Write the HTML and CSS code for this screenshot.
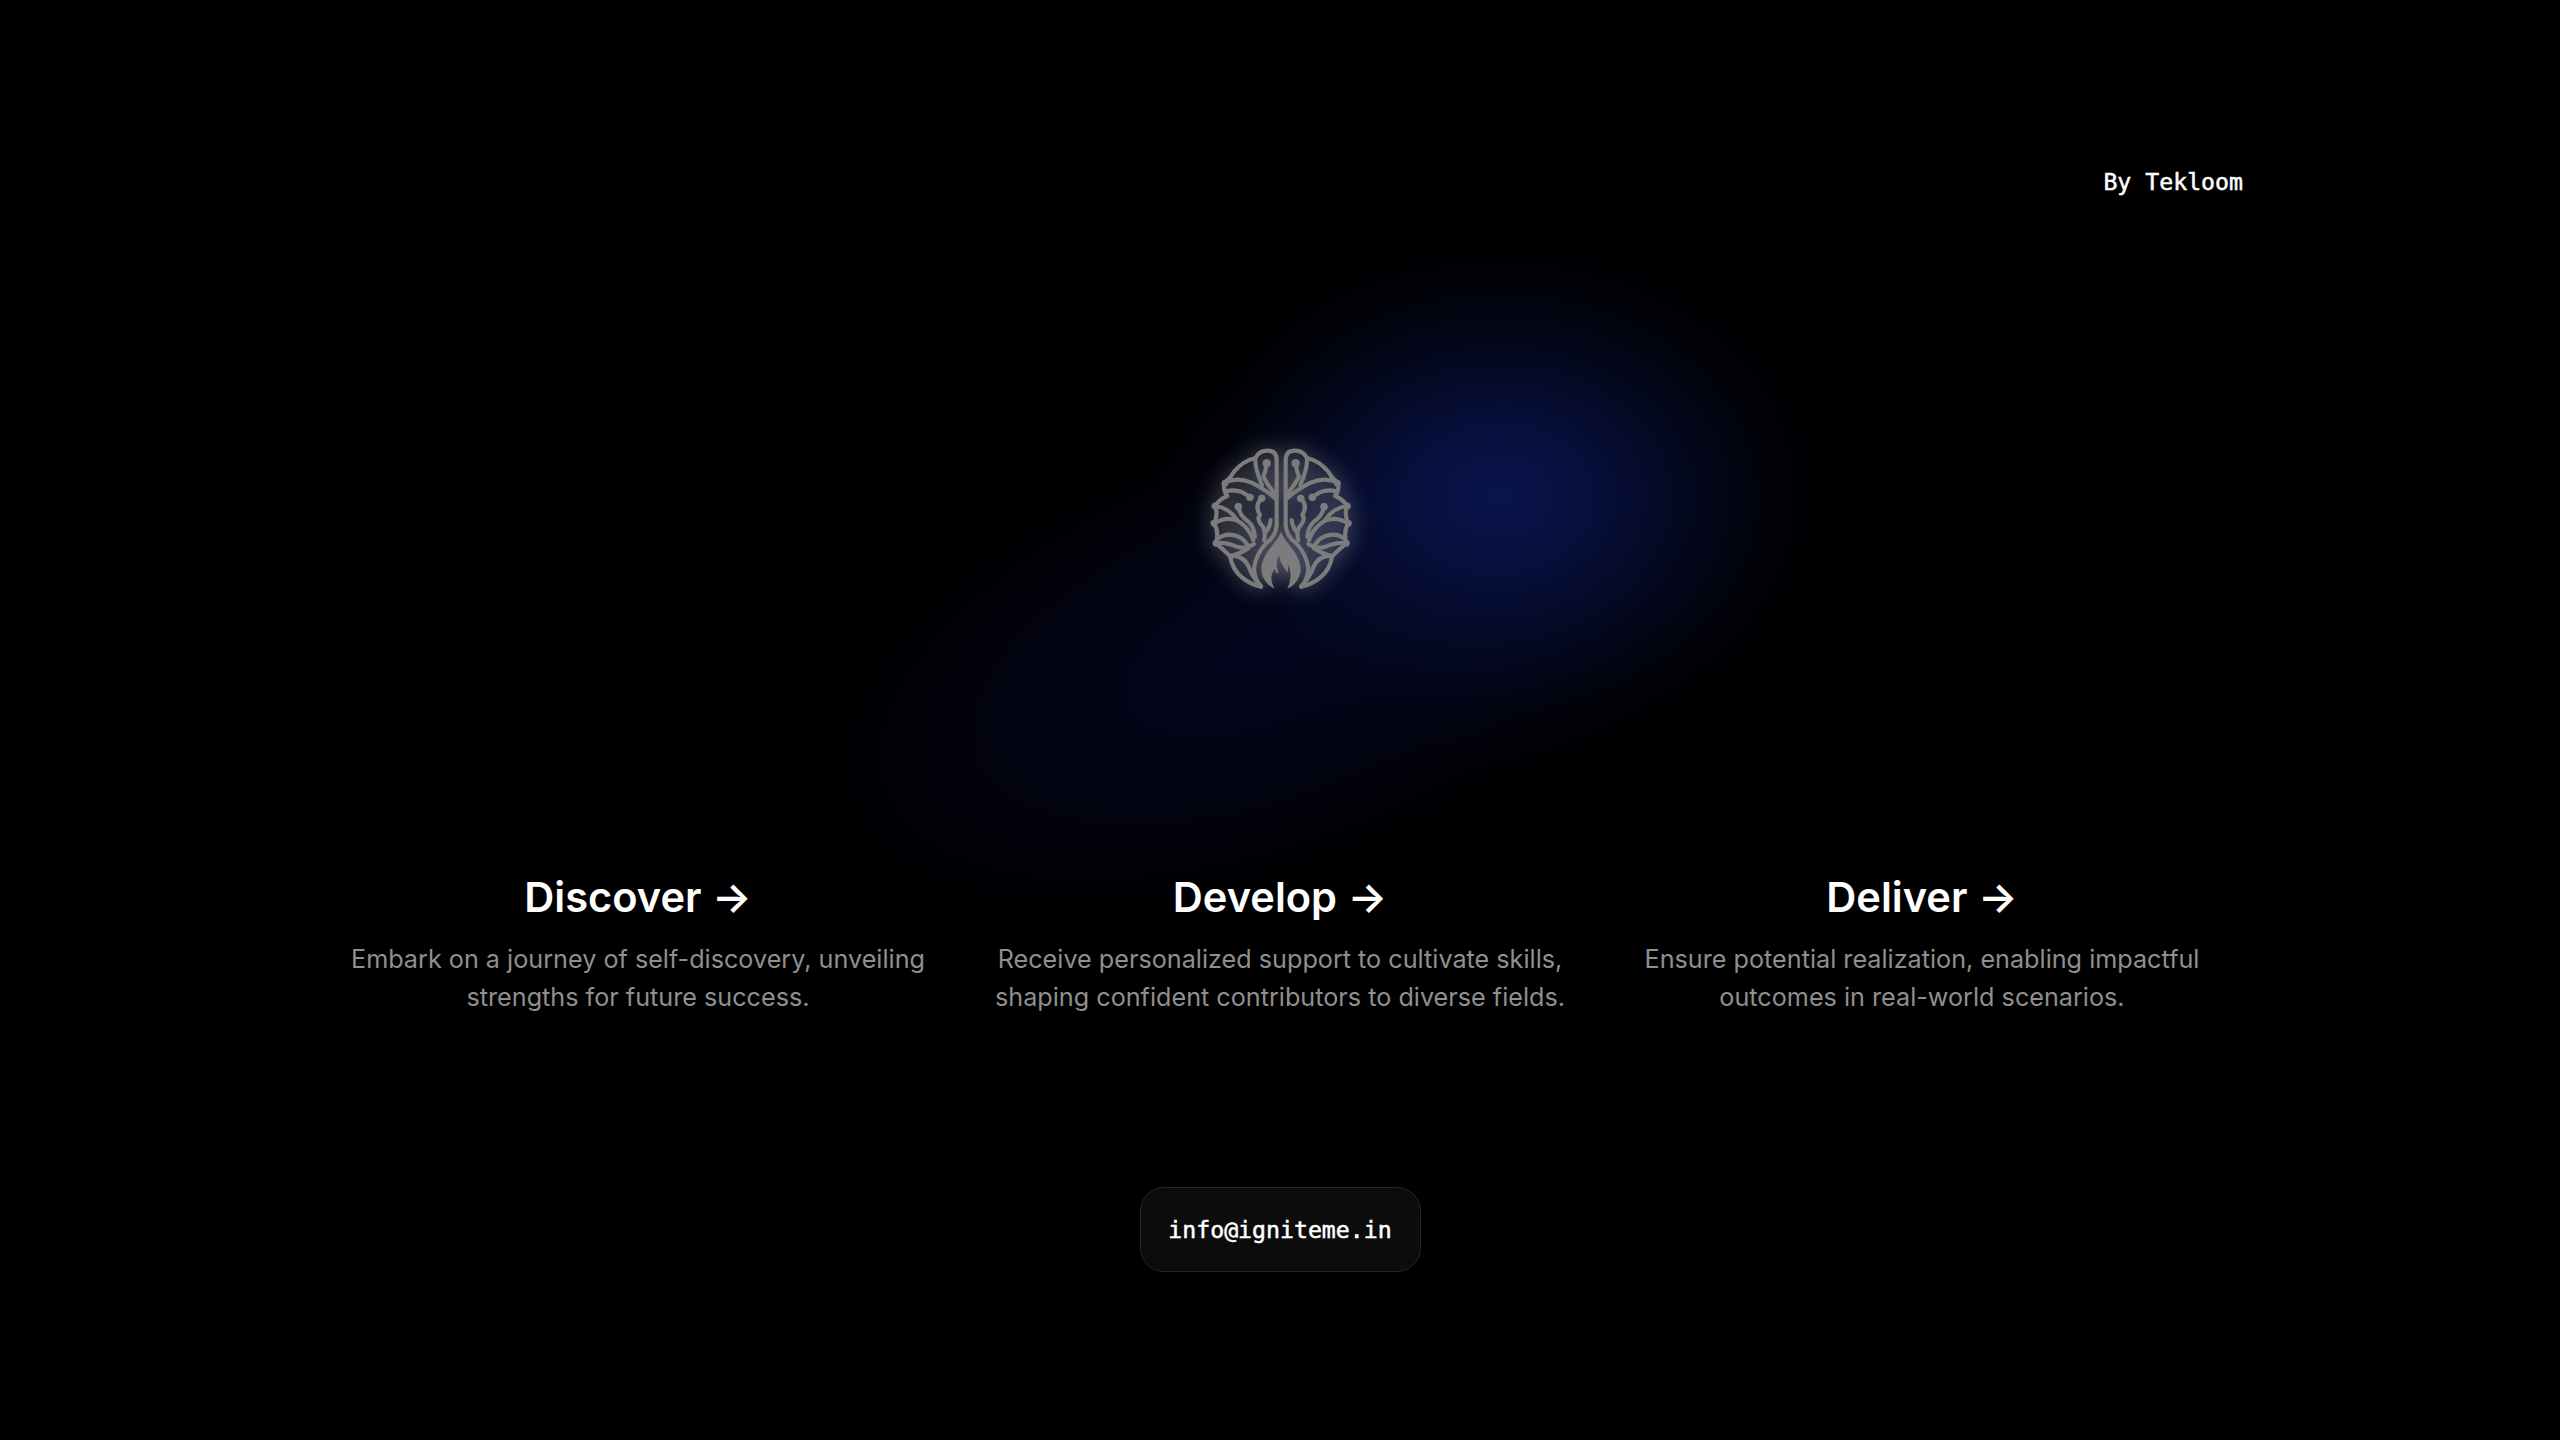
FILE: index.html
```html
<!DOCTYPE html>
<html lang="en">
<head>
    <meta charset="UTF-8">
    <meta name="viewport" content="width=device-width, initial-scale=1.0">
    <title>Ignite Me</title>
    <link rel="stylesheet" href="styles.css">
</head>
<body>

    <div class="glow glow-tail"></div>
    <div class="glow glow-main"></div>

    <main class="page">
        <div class="byline">By Tekloom</div>

        <!-- Brain logo -->
        <div class="logo">
            <svg class="brain" viewBox="0 0 600 510" width="200" height="170" aria-label="Brain logo">
                <defs>
                    <g id="half">
                        <g fill="none" stroke-width="12.5" stroke-linecap="round" stroke-linejoin="round">
                            <path d="M290 285V90Q290 62 262 62Q238 62 226 84Q190 92 162 125Q152 144 135 157Q126 176 142 198Q118 208 105 228Q116 250 102 280Q118 304 108 340Q128 356 150 378Q158 420 186 442Q212 464 243 470"/>
                            <path d="M226 84Q224 115 246 165"/>
                            <path d="M260 100Q258 122 250 140Q262 165 284 190"/>
                            <path d="M135 157Q172 140 215 158Q255 178 286 205"/>
                            <path d="M135 185Q175 172 210 202"/>
                            <path d="M175 230Q178 255 205 275Q222 290 225 320"/>
                            <path d="M105 228Q145 232 170 268"/>
                            <path d="M102 280Q140 258 172 272Q205 290 220 330"/>
                            <path d="M245 205Q222 228 240 255Q228 268 250 292Q258 310 252 330"/>
                            <path d="M272 270Q270 290 258 305"/>
                            <path d="M115 325Q142 305 175 320Q196 330 205 350"/>
                            <path d="M108 340Q135 335 170 350Q195 358 222 342"/>
                            <path d="M150 378Q180 372 205 355"/>
                            <path d="M150 378Q195 375 210 420Q222 448 243 468"/>
                            <path d="M290 285Q288 320 258 340Q228 372 222 415Q224 448 243 470"/>
                        </g>
                        <circle cx="260" cy="100" r="12"/>
                        <circle cx="210" cy="202" r="11"/>
                        <circle cx="245" cy="205" r="11"/>
                        <circle cx="175" cy="230" r="11"/>
                        <circle cx="105" cy="228" r="10"/>
                        <circle cx="102" cy="280" r="10"/>
                        <circle cx="108" cy="340" r="10"/>
                        <circle cx="135" cy="160" r="10"/>
                    </g>
                </defs>
                <g class="brain-lines">
                    <use href="#half"/>
                    <use href="#half" transform="translate(607 0) scale(-1 1)"/>
                </g>
                <path class="flame" fill-rule="evenodd" d="M303 303C296 336 246 366 244 416C243 442 262 466 284 476C270 452 272 432 284 418C288 430 292 432 296 428C288 410 288 392 298 376C300 404 316 414 322 428C326 414 324 408 322 402C334 418 336 446 322 476C346 466 362 442 362 416C360 366 310 336 303 303Z"/>
            </svg>
        </div>

        <section class="cards">
            <div class="card">
                <h2>Discover <span class="arrow">-&gt;</span></h2>
                <p>Embark on a journey of self-discovery, unveiling strengths for future success.</p>
            </div>
            <div class="card">
                <h2>Develop <span class="arrow">-&gt;</span></h2>
                <p>Receive personalized support to cultivate skills, shaping confident contributors to diverse fields.</p>
            </div>
            <div class="card">
                <h2>Deliver <span class="arrow">-&gt;</span></h2>
                <p>Ensure potential realization, enabling impactful outcomes in real-world scenarios.</p>
            </div>
        </section>

        <div class="contact">
            <a class="email" href="mailto:info@igniteme.in">info@igniteme.in</a>
        </div>
    </main>

</body>
</html>
```

FILE: styles.css
```css
* {
    margin: 0;
    padding: 0;
    box-sizing: border-box;
}

html, body {
    height: 100%;
}

body {
    background-color: #000;
    color: #fff;
    font-family: 'Inter', sans-serif;
    overflow: hidden;
}

/* Blue glow behind the logo */
.glow {
    position: absolute;
    border-radius: 50%;
}

.glow-main {
    left: 1150px;
    top: 220px;
    width: 700px;
    height: 550px;
    background: radial-gradient(closest-side, rgba(9, 20, 78, 1) 0%, rgba(8, 17, 66, 0.85) 28%, rgba(6, 13, 50, 0.55) 55%, rgba(3, 7, 28, 0.22) 80%, rgba(0, 0, 0, 0) 100%);
}

.glow-tail {
    left: 740px;
    top: 400px;
    width: 1060px;
    height: 500px;
    transform: rotate(-20deg);
    background: radial-gradient(closest-side, rgba(6, 12, 60, 0.5) 0%, rgba(4, 8, 42, 0.42) 50%, rgba(2, 4, 24, 0.2) 78%, rgba(0, 0, 0, 0) 100%);
}

.page {
    position: relative;
    max-width: 1926px;
    margin: 0 auto;
    padding-top: 168px;
}

.byline {
    text-align: right;
    font-family: 'DejaVu Sans Mono', monospace;
    font-size: 23.2px;
    line-height: 28px;
    -webkit-text-stroke: 0.5px #fff;
}

.logo {
    display: flex;
    justify-content: center;
    margin-top: 234px;
}

.brain {
    display: block;
    filter: drop-shadow(0 0 11px rgba(255, 255, 255, 0.42));
}

.brain-lines {
    fill: #7c7c7c;
    stroke: #7c7c7c;
}

.flame {
    fill: #7c7c7c;
}

.cards {
    display: grid;
    grid-template-columns: repeat(3, 1fr);
    margin-top: 273px;
}

.card {
    text-align: center;
    padding: 0 30px;
}

.card h2 {
    font-size: 41.6px;
    font-weight: 600;
    line-height: 48px;
    margin-bottom: 19px;
}

.card p {
    font-size: 25.2px;
    line-height: 38.4px;
    color: #8f8f8f;
}

.contact {
    display: flex;
    justify-content: center;
    margin-top: 170px;
}

.email {
    display: block;
    width: 281px;
    height: 85px;
    line-height: 83px;
    text-align: center;
    font-family: 'DejaVu Sans Mono', monospace;
    font-size: 23.2px;
    -webkit-text-stroke: 0.5px #fff;
    color: #fff;
    text-decoration: none;
    background-color: #0c0c0c;
    border: 1px solid #262626;
    border-radius: 24px;
}
```
